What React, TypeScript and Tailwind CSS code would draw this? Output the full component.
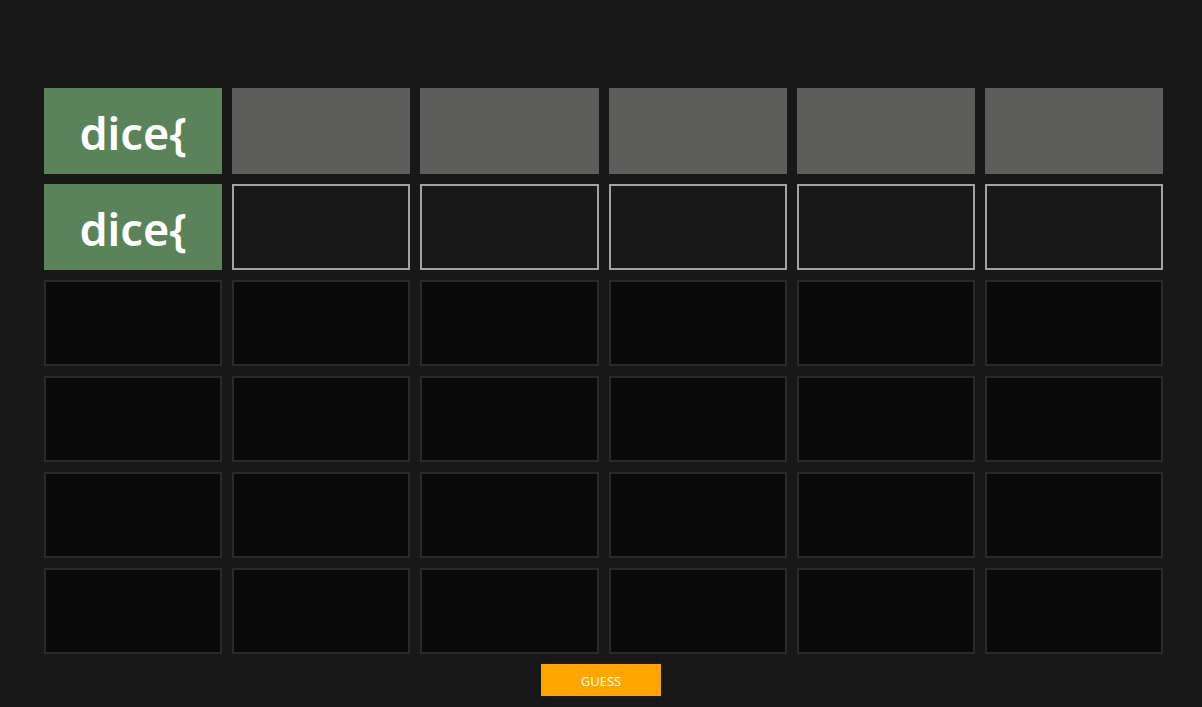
const ROWS = 6;
const COLS = 6;

function Cell({ row, col }: { row: number; col: number }) {
  if (row < 2 && col === 0) {
    return (
      <div className="flex h-[86px] items-center justify-center bg-[#5a835a] pt-[4px] text-[45px] font-semibold text-white">
        dice{"{"}
      </div>
    );
  }
  if (row === 0) return <div className="h-[86px] bg-[#5d5d5b]" />;
  if (row === 1) return <div className="h-[86px] border-2 border-[#a3a3a3] bg-[#181818]" />;
  return <div className="h-[86px] border-2 border-[#2a2a2a] bg-[#0a0a0a]" />;
}

export default function App() {
  return (
    <div
      className="flex h-[707px] w-full flex-col bg-[#181818] pt-[88px]"
      style={{ fontFamily: '"Noto Sans", "Open Sans", sans-serif' }}
    >
      <div className="ml-[44px] grid w-[1119px] grid-cols-6 gap-[10px]">
        {Array.from({ length: ROWS }).map((_, r) =>
          Array.from({ length: COLS }).map((_, c) => <Cell key={`${r}-${c}`} row={r} col={c} />)
        )}
      </div>
      <div className="mt-[10px] flex justify-center">
        <button
          type="button"
          className="flex h-[32px] w-[120px] items-center justify-center bg-[#ffa500] pt-[3px] text-[13px] text-white"
        >
          GUESS
        </button>
      </div>
    </div>
  );
}
